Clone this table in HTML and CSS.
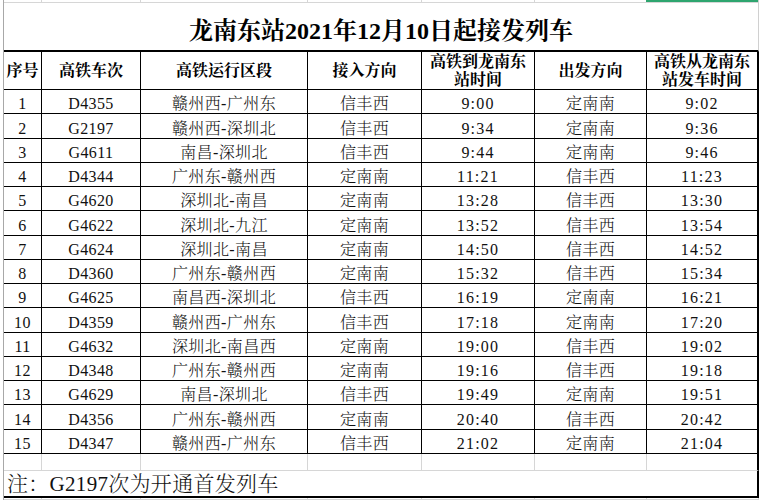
FILE: index.html
```html
<!DOCTYPE html>
<html lang="zh-CN">
<head>
<meta charset="utf-8">
<title>龙南东站2021年12月10日起接发列车</title>
<link rel="stylesheet" href="styles.css">
</head>
<body>
<div class="sheet">
  <div class="strip"></div><div class="strip"></div><div class="strip"></div><div class="strip"></div><div class="strip"></div><div class="strip"></div><div class="strip last"><span class="sel"></span></div>

  <div class="title">龙南东站2021年12月10日起接发列车</div>

  <div class="hd">序号</div>
  <div class="hd">高铁车次</div>
  <div class="hd">高铁运行区段</div>
  <div class="hd">接入方向</div>
  <div class="hd two">高铁到龙南东<br>站时间</div>
  <div class="hd">出发方向</div>
  <div class="hd two last">高铁从龙南东<br>站发车时间</div>

  <div class="c">1</div><div class="c">D4355</div><div class="c">赣州西-广州东</div><div class="c">信丰西</div><div class="c t">9:00</div><div class="c">定南南</div><div class="c t last">9:02</div>
  <div class="c">2</div><div class="c">G2197</div><div class="c">赣州西-深圳北</div><div class="c">信丰西</div><div class="c t">9:34</div><div class="c">定南南</div><div class="c t last">9:36</div>
  <div class="c">3</div><div class="c">G4611</div><div class="c">南昌-深圳北</div><div class="c">信丰西</div><div class="c t">9:44</div><div class="c">定南南</div><div class="c t last">9:46</div>
  <div class="c">4</div><div class="c">D4344</div><div class="c">广州东-赣州西</div><div class="c">定南南</div><div class="c t">11:21</div><div class="c">信丰西</div><div class="c t last">11:23</div>
  <div class="c">5</div><div class="c">G4620</div><div class="c">深圳北-南昌</div><div class="c">定南南</div><div class="c t">13:28</div><div class="c">信丰西</div><div class="c t last">13:30</div>
  <div class="c">6</div><div class="c">G4622</div><div class="c">深圳北-九江</div><div class="c">定南南</div><div class="c t">13:52</div><div class="c">信丰西</div><div class="c t last">13:54</div>
  <div class="c">7</div><div class="c">G4624</div><div class="c">深圳北-南昌</div><div class="c">定南南</div><div class="c t">14:50</div><div class="c">信丰西</div><div class="c t last">14:52</div>
  <div class="c">8</div><div class="c">D4360</div><div class="c">广州东-赣州西</div><div class="c">定南南</div><div class="c t">15:32</div><div class="c">信丰西</div><div class="c t last">15:34</div>
  <div class="c">9</div><div class="c">G4625</div><div class="c">南昌西-深圳北</div><div class="c">信丰西</div><div class="c t">16:19</div><div class="c">定南南</div><div class="c t last">16:21</div>
  <div class="c">10</div><div class="c">D4359</div><div class="c">赣州西-广州东</div><div class="c">信丰西</div><div class="c t">17:18</div><div class="c">定南南</div><div class="c t last">17:20</div>
  <div class="c">11</div><div class="c">G4632</div><div class="c">深圳北-南昌西</div><div class="c">定南南</div><div class="c t">19:00</div><div class="c">信丰西</div><div class="c t last">19:02</div>
  <div class="c">12</div><div class="c">D4348</div><div class="c">广州东-赣州西</div><div class="c">定南南</div><div class="c t">19:16</div><div class="c">信丰西</div><div class="c t last">19:18</div>
  <div class="c">13</div><div class="c">G4629</div><div class="c">南昌-深圳北</div><div class="c">信丰西</div><div class="c t">19:49</div><div class="c">定南南</div><div class="c t last">19:51</div>
  <div class="c">14</div><div class="c">D4356</div><div class="c">广州东-赣州西</div><div class="c">定南南</div><div class="c t">20:40</div><div class="c">信丰西</div><div class="c t last">20:42</div>
  <div class="c">15</div><div class="c">D4347</div><div class="c">赣州西-广州东</div><div class="c">信丰西</div><div class="c t">21:02</div><div class="c">定南南</div><div class="c t last">21:04</div>

  <div class="blank"></div><div class="blank"></div><div class="blank"></div><div class="blank"></div><div class="blank"></div><div class="blank"></div><div class="blank last"></div>

  <div class="note">注：G2197次为开通首发列车</div>

  <div class="tail"></div><div class="tail"></div><div class="tail"></div><div class="tail"></div><div class="tail"></div><div class="tail"></div><div class="tail"></div>
</div>
</body>
</html>
```
FILE: styles.css
```css
html, body {
  margin: 0;
  padding: 0;
  background: #fff;
}
body {
  width: 762px;
  height: 500px;
  overflow: hidden;
  padding-left: 3px;
  box-sizing: border-box;
  font-family: "Liberation Serif", "Noto Serif CJK SC", "Noto Sans CJK SC", serif;
  color: #111;
}
.sheet {
  display: grid;
  grid-template-columns: 38px 99px 167px 114px 113px 112px 112px;
  grid-template-rows: 3px 49px 38px repeat(15, 24.27px) 17px 27px 2px;
  border-left: 1px solid #a8a8a8;
  width: 756px;
  box-sizing: border-box;
}
.sheet > div {
  box-sizing: border-box;
  min-width: 0;
}
.strip {
  border-right: 1px solid #d6d6d6;
  border-bottom: 1px solid #d6d6d6;
  position: relative;
}
.strip.last {
  border-right: 1px solid #d0d0d0;
}
.sel {
  position: absolute;
  left: -1px;
  right: 0;
  top: 0;
  height: 2px;
  background: #2ea56f;
}
.title {
  grid-column: 1 / -1;
  border-right: 1px solid #d0d0d0;
  border-bottom: 2px solid #000;
  display: flex;
  align-items: center;
  justify-content: center;
  padding-top: 3px;
  font-size: 24px;
  font-weight: bold;
  color: #000;
  white-space: nowrap;
}
.hd {
  border-right: 1px solid #000;
  border-bottom: 1px solid #000;
  display: flex;
  align-items: center;
  justify-content: center;
  text-align: center;
  font-size: 16px;
  line-height: 18px;
  font-weight: bold;
  color: #000;
  white-space: nowrap;
}
.hd.last, .c.last, .blank.last {
  border-right: 2px solid #000;
}
.c {
  border-right: 1px solid #000;
  border-bottom: 1px solid #000;
  display: flex;
  align-items: flex-end;
  justify-content: center;
  font-size: 16px;
  line-height: 18px;
  font-weight: 300;
  letter-spacing: 0.4px;
  white-space: nowrap;
}
.c.t {
  letter-spacing: 1.2px;
}
.blank {
  border-right: 1px solid #d6d6d6;
  border-bottom: 1px solid #d6d6d6;
}
.note {
  grid-column: 1 / -1;
  border-right: 2px solid #000;
  border-bottom: 2px solid #000;
  display: flex;
  align-items: flex-end;
  padding-left: 3px;
  font-size: 21px;
  line-height: 24px;
  font-weight: 300;
  letter-spacing: 0.3px;
  white-space: nowrap;
}
.tail {
  border-right: 1px solid #d6d6d6;
  border-bottom: 1px solid #d6d6d6;
}
```
